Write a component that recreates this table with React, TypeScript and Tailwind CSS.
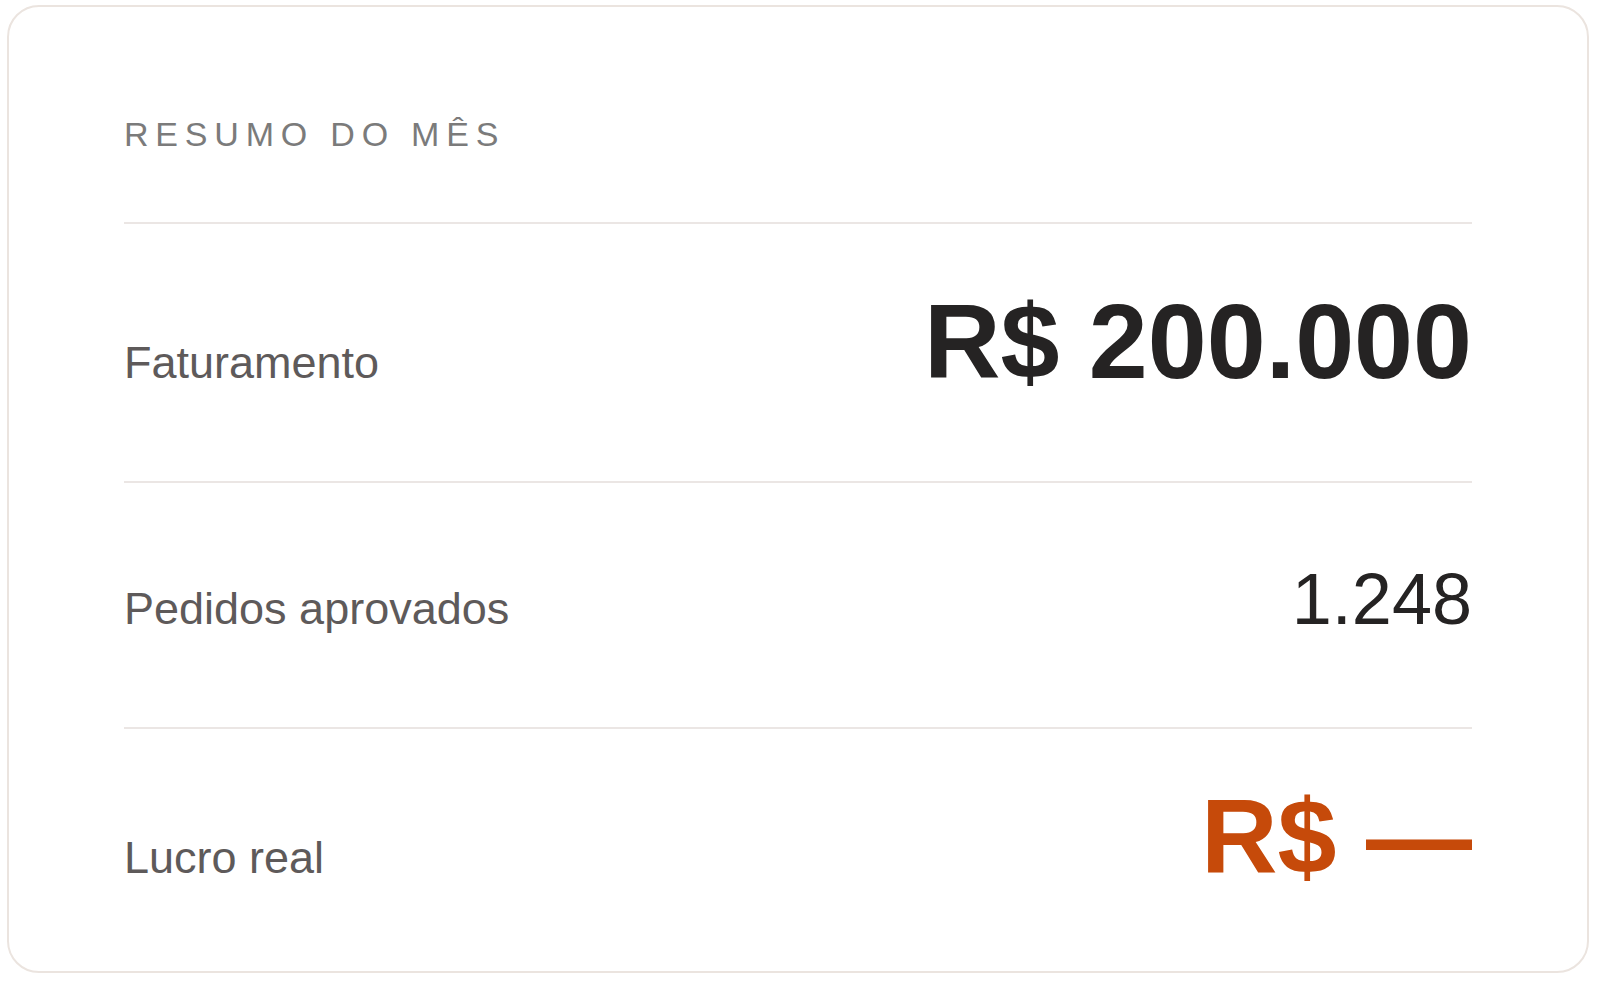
const rows = [
  { label: "Faturamento", value: "R$ 200.000", kind: "big", pad: "pt-[64px] pb-[87px]" },
  { label: "Pedidos aprovados", value: "1.248", kind: "mid", pad: "pt-[80px] pb-[92px]" },
  { label: "Lucro real", value: "R$ —", kind: "accent", pad: "pt-[54px] pb-[79px]" },
];

export default function App() {
  return (
    <div
      className="min-h-screen bg-white pt-[5px] pl-[7px] pr-[11px]"
      style={{ fontFamily: '"Liberation Sans", Arial, sans-serif' }}
    >
      <div className="w-[1582px] h-[968px] rounded-[32px] border-2 border-[#ebe4df] bg-white px-[115px] pt-[110px]">
        {/* Header */}
        <h2 className="text-[34px] leading-none font-normal tracking-[0.2em] text-[#7b7b7b] pb-[71px]">
          RESUMO DO MÊS
        </h2>

        {/* Rows */}
        {rows.map((row) => (
          <div
            key={row.label}
            className={`flex items-baseline justify-between border-t-2 border-[#ebe6e4] ${row.pad}`}
          >
            <span className="text-[45px] leading-none text-[#5e5a5a]">{row.label}</span>
            {row.kind === "big" && (
              <span className="text-[106px] leading-none font-bold text-[#252323]">{row.value}</span>
            )}
            {row.kind === "mid" && (
              <span className="text-[72px] leading-none text-[#252323]">{row.value}</span>
            )}
            {row.kind === "accent" && (
              <span className="text-[106px] leading-none font-bold text-[#c64a0a]">{row.value}</span>
            )}
          </div>
        ))}
      </div>
    </div>
  );
}
